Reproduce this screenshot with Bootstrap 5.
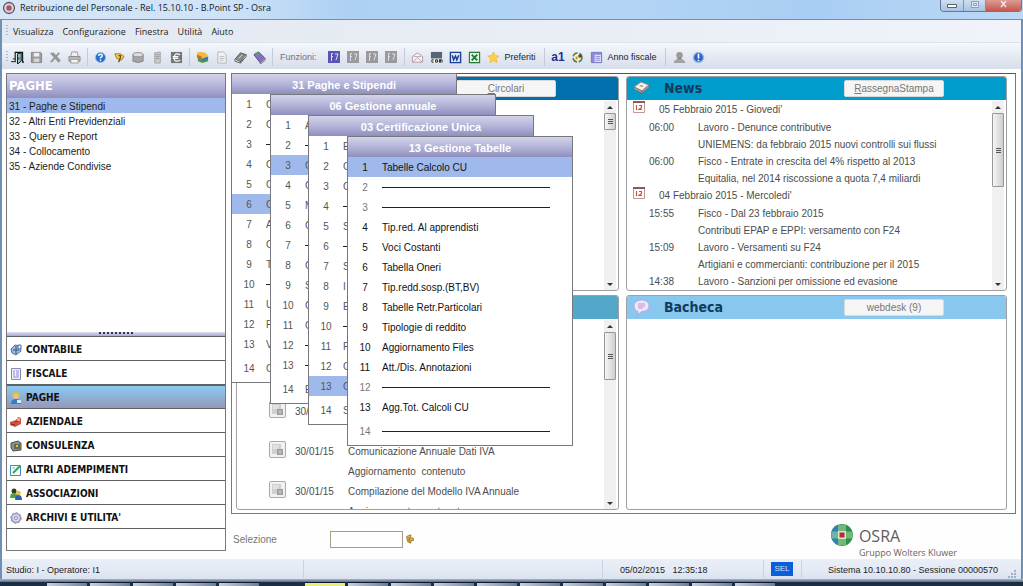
<!DOCTYPE html>
<html lang="it">
<head>
<meta charset="utf-8">
<meta name="viewport" content="width=device-width, initial-scale=1">
<title>Retribuzione del Personale - Osra</title>
<link href="https://cdn.jsdelivr.net/npm/bootstrap@5.3.0/dist/css/bootstrap.min.css" rel="stylesheet">
<style>
  :root {
    --ui: "Liberation Sans", Arial, sans-serif;
    --chrome: "Open Sans", "Segoe UI", sans-serif;
    --strong: "DejaVu Sans Condensed", Tahoma, sans-serif;
    --line: #77777d;
    --lilac: linear-gradient(#d3d3ea, #b4b4da 50%, #8f8fbd);
    --pick: #9fb9ec;
  }
  body { font-family: var(--ui); font-size: 10px; line-height: 14px; color: #1c1c1c; background: #fefefe; }
  button { font-family: inherit; color: inherit; }
  a { color: inherit; text-decoration: none; }
  svg { display: block; }

  /* window chrome */
  .titlebar { height: 19px; padding: 0 1px 2px 2px; color: #0d1a2a;
    background: linear-gradient(90deg, #d6e6f6 0, #cfe3f8 22%, #add0f4 34%, #b3d4f5 60%, #a9cef3 80%, #bcd8f5 100%); }
  .titlebar h1 { font: 9px/16px var(--chrome); }
  .winbtns { height: 12px; border: 1px solid #64789a; border-top: 0; border-radius: 0 0 4px 4px; overflow: hidden; }
  .winbtns button { border: 0; padding: 0; width: 22px; background: linear-gradient(#cfdff0, #a9c3e0); }
  .winbtns button + button { border-left: 1px solid #7f93b0; }
  .winbtns .shut { width: 36px; background: linear-gradient(#dd9c93, #c4584c); }
  .frame { border: solid #6f8fb5; border-width: 1px 2px 0; min-height: 0; }
  .menubar { height: 23px; padding-left: 4px; gap: 9px; background: linear-gradient(90deg, #e2e8f1, #e9eef6 60%, #f0f3f9); font: 9px/20px var(--chrome); border-bottom: 1px solid #dde3ec; }
  .menubar a { padding-top: 2px; }
  .menubar .grip { margin-right: -4px; }
  .grip { width: 2px; height: 12px; background: repeating-linear-gradient(#a9b8d0 0 1px, transparent 1px 3px); }
  .tools { height: 26px; padding: 2px 0 0 4px; background: linear-gradient(#f5f8fc, #e3e8f2 55%, #d8deea); font-size: 9px; }
  .tools button { border: 0; background: none; padding: 0; width: 19px; height: 20px; display: flex; align-items: center; justify-content: center; }
  .tools .wide { width: auto; gap: 5px; padding: 0 4px 0 3px; }
  .vr-line { width: 1px; height: 18px; background: #c3cad8; margin: 0 3px; }
  .vr-line.far { margin: 0 4px; }

  /* side panel */
  .workspace { background: #fefefe; padding: 4px 5px 0 4px; gap: 5px; min-height: 0; }
  .side { flex: 0 0 220px; margin-bottom: 8px; border: 1px solid var(--line); background: #fff; }
  .side h2 { height: 24px; margin: 0; padding-left: 2px; font: bold 13px/23px var(--strong); color: #fff; background: var(--lilac); }
  .side .picks a { display: block; height: 15px; line-height: 17px; padding-left: 2px; }
  .side .picks .on { background: var(--pick); }
  .splitter { height: 4px; background: linear-gradient(#dcdcf0, #a9a9d2); }
  .splitter i { display: block; width: 35px; height: 2px; margin: 0 auto; background: repeating-linear-gradient(90deg, #33334d 0 2px, transparent 2px 4px); }
  .areas a { display: flex; align-items: center; gap: 4px; height: 24px; padding: 2px 0 0 3px; border-top: 1px solid #5f5f66; font: bold 10px/20px var(--strong); color: #111; }
  .areas .on { background: linear-gradient(#8ccbf2, #8fb3d8 45%, #9797b8); border-top-width: 2px; }
  .areas .rest { height: 22px; border-top: 1px solid #5f5f66; }

  /* panels */
  .stage, .stage-wrap { min-width: 0; min-height: 0; }
  .desk { border: 1px solid var(--line); border-top-color: #555; padding: 2px 8px 3px 4px; background: #fff; display: grid;
    grid-template: minmax(0, 1fr) minmax(0, 1fr) / minmax(0, 383fr) minmax(0, 381fr); gap: 4px 7px; min-height: 0; }
  .pane { border: 1px solid #a0a0a4; border-radius: 3px; overflow: hidden; min-height: 0; background: #fff; }
  .pane-head { height: 24px; margin: -1px -1px 0; padding: 0 63px 0 7px; flex: none; color: #113a5c; }
  .pane-head h2 { margin: 0; padding-left: 14px; font: bold 14px/24px var(--strong); }
  .pane-head .tag { width: 100px; height: 17px; border: 1px solid #d9d9d9; border-radius: 2px; padding: 1px 0 0; background: #f5f5f5; color: #777; line-height: 14px; }
  .h-circ { background: #006fab; } .h-news { background: #009dcc; } .h-low { background: #53a8ca; } .h-bach { background: #88c8ef; }
  .pane-body { color: #4c4c4c; min-height: 0; overflow: hidden; }
  .sbar { width: 12px; margin: 1px 2px 0 0; flex: none; background: #f0f0f0; }
  .sbar b { height: 12px; display: flex; align-items: center; justify-content: center; }
  .sbar b::before { content: ""; border: solid transparent; border-width: 0 3px 3px; border-bottom-color: #333; }
  .sbar b:last-child { margin-top: auto; }
  .sbar b:last-child::before { border-width: 3px 3px 0; border-top-color: #333; }
  .sbar i { border: 1px solid #979797; border-radius: 1px; background: linear-gradient(90deg, #f5f5f5, #cfcfcf); display: flex; align-items: center; justify-content: center; }
  .sbar i::before { content: ""; width: 5px; height: 5px; background: repeating-linear-gradient(#555 0 1px, transparent 1px 2px); }
  .thumb-s { height: 17px; } .thumb-m { height: 48px; } .thumb-l { height: 74px; }

  .news { margin: 0; padding-top: 1px; }
  .news dt { display: flex; gap: 14px; height: 18px; line-height: 18px; padding-left: 6px; font-weight: 400; align-items: flex-start; }
  .news dd { display: flex; height: 17px; line-height: 18px; margin: 0; padding-left: 22px; }
  .news time { width: 49px; flex: none; }

  .bulletins { padding: 82px 0 0 32px; margin: 0; list-style: none; }
  .bulletins li { display: grid; grid-template-columns: 26px 53px 1fr; grid-auto-rows: 20px; line-height: 21px; white-space: nowrap; }
  .bulletins p { margin: 0; grid-column: 3; }
  .doc-btn { width: 17px; height: 17px; padding: 1px; border: 1px solid #aaa; border-radius: 2px; background: #f1f1f1; }

  /* cascading menus, laid over the desk */
  .cascade { position: absolute; width: 226px; border: 1px solid var(--line); background: #fff; overflow: hidden; }
  .c1 { left: 0; top: 0; } .c2 { left: 39px; top: 21px; } .c3 { left: 77px; top: 42px; } .c4 { left: 116px; top: 63px; }
  .cascade h3 { margin: 0; height: 20px; font: bold 11px/22px var(--ui); color: #fff; text-align: center; background: var(--lilac); }
  .cascade ol { list-style: none; margin: 0; padding: 0; }
  .cascade li { display: flex; align-items: center; height: 20px; line-height: 18px; color: #555; }
  .cascade li:last-child { height: 28px; }
  .cascade li span { width: 34px; text-align: center; flex: none; padding-top: 2px; }
  .cascade li a { padding-top: 2px; }
  .cascade li.on { background: var(--pick); }
  .cascade hr { width: 168px; margin: 0; border-top: 1px solid #222; opacity: 1; }
  .c4 li { color: #111; }
  .c4 li.off span { color: #777; }

  /* selection strip and status bar */
  .strip { height: 45px; padding-left: 2px; color: #777; }
  .strip label { padding-top: 6px; }
  .strip input { width: 73px; height: 17px; margin: 5px 2px 0 53px; padding: 0 2px; border: 1px solid #a59f86; background: #fff; }
  .strip .hand { margin: 5px auto 0 0; }
  .strip .globe { margin: 9px 5px 0 0; }
  .brand { margin-right: 59px; padding-top: 12px; color: #5d5d5d; }
  .brand strong { display: block; font: 16px/20px var(--chrome); }
  .brand small { display: block; font: 9px/13px var(--chrome); color: #6b625a; }
  .status { height: 20px; padding: 0 5px 0 4px; font-size: 9px; line-height: 20px; background: linear-gradient(#e9eef7, #e4eaf4 60%, #dbe2ee); }
  .status .cell { height: 18px; border-right: 1px solid #cbd3e0; white-space: nowrap; }
  .cell-user { flex: 0 0 298px; }
  .cell-time { flex: 0 0 161px; padding-left: 17px; }
  .cell-sel { flex: 0 0 38px; padding-left: 7px; }
  .cell-sys { flex: 0 0 206px; padding: 1px 0 0 26px; }
  .status .sel { width: 22px; height: 14px; line-height: 14px; background: #0b5fd8; color: #cfe2ff; text-align: center; font-size: 8px; }
  .edge { height: 3px; background: linear-gradient(#a9b9d0, #566b8c); }
  .taskbar { height: 4px; background: #1d2d42; padding-left: 47px; gap: 3px; overflow: hidden; }
  .taskbar i { width: 40px; border-top: 1px solid #0e1826; background: linear-gradient(90deg, #c9d1dc, #6d7f96); }
  .taskbar .lit { background: #ecec7a; }
</style>
</head>
<body class="d-flex flex-column vh-100 overflow-hidden">
<svg width="0" height="0" class="position-absolute" aria-hidden="true">
  <symbol id="door" viewBox="0 0 14 14"><path d="M0 11.500h4M2 8.500h2" stroke="#111"/><path d="M4.500 12V1.500h8V12H14" fill="none" stroke="#111" stroke-width="1.200"/><path d="M7 3l4-1v9l-4 3z" fill="#8fc4c2" stroke="#111"/><path d="M8.500 7v2" stroke="#111"/></symbol>
  <symbol id="disk" viewBox="0 0 14 14"><path d="M1.500 1.500h10l1 1v10h-11z" fill="#9b9b9b" stroke="#858585"/><path d="M4 2h6v4H4z" fill="#eee"/><path d="M4 8h6v4H4z" fill="#d5d5d5"/></symbol>
  <symbol id="cross" viewBox="0 0 14 14"><path d="M2 2l9 10M11 2L2 12M4 2l8 9" stroke="#969696" stroke-width="2"/></symbol>
  <symbol id="print" viewBox="0 0 14 14"><path d="M4 1h6l1 5H3z" fill="#eee" stroke="#999"/><path d="M1 6h12v5H1z" fill="#bbb" stroke="#8b8b8b"/><path d="M3 9h8v4H3z" fill="#f3f3f3" stroke="#999"/></symbol>
  <symbol id="help" viewBox="0 0 14 14"><circle cx="7" cy="7" r="5.500" fill="#2c6fd0" stroke="#9cc0ee"/><path d="M5 5.500q0-2 2-2t2 1.700q0 1-2 2V8M7 9.200v1.500" stroke="#fff" stroke-width="1.400" fill="none"/></symbol>
  <symbol id="hint" viewBox="0 0 14 14"><path d="M2 3h6l4 3-3 4-5-2z" fill="#f4cc4a" stroke="#a97a1d"/><path d="M6 5h2v2L6 12" stroke="#6d4a10" stroke-width="1.400" fill="none"/></symbol>
  <symbol id="db" viewBox="0 0 14 14"><path d="M1 4v7q5.500 3 11 0V4" fill="#a5a5a5" stroke="#858585"/><ellipse cx="6.500" cy="4" rx="5.500" ry="2.300" fill="#ddd" stroke="#8c8c8c"/></symbol>
  <symbol id="tower" viewBox="0 0 14 14"><path d="M4 2l6-1v12H4z" fill="#c8c8c8" stroke="#a5a5a5"/><path d="M5 4h4M5 6h4M5 8h4" stroke="#999"/></symbol>
  <symbol id="euro" viewBox="0 0 14 14"><path d="M1 1h12v12H1z" fill="#777"/><path d="M11 4Q5 1 4.500 7T11 10M3 6h6M3 8h6" stroke="#fff" fill="none" stroke-width="1.300"/></symbol>
  <symbol id="cube" viewBox="0 0 14 14"><path d="M2 6l5 2 6-2v5l-6 2-5-2z" fill="#4d9a4a"/><path d="M1 2q4-2 9 0l3 3-6 3-6-2z" fill="#f0bc38"/><path d="M1 4l5 2v3L1 7z" fill="#d9622e"/><path d="M7 8l6-2v3l-6 2z" fill="#3b78b8"/></symbol>
  <symbol id="page" viewBox="0 0 14 14"><path d="M3 1h6l3 3v9H3z" fill="#f0f0f0" stroke="#b5b5b5"/><path d="M5 6h5M5 8h5M5 10h4" stroke="#bbb"/></symbol>
  <symbol id="book" viewBox="0 0 14 14"><path d="M1 9l6-7 6 2-6 8z" fill="#888" stroke="#555"/><path d="M1 9v2l6 2v-1M7 13l6-7V4" fill="#eee" stroke="#555"/><path d="M5 8l4-4" stroke="#ddd"/></symbol>
  <symbol id="books" viewBox="0 0 14 14"><path d="M1 4l5-3 7 7-5 5z" fill="#8a6cc8" stroke="#54418f"/><path d="M2 2l4 0 1 3-3 1z" fill="#57a06a"/><path d="M8 13l5-5v2l-5 4z" fill="#eee" stroke="#777"/></symbol>
  <symbol id="mail" viewBox="0 0 14 14"><path d="M1.500 6L7 2l5.500 4v6h-11z" fill="#fbeff0" stroke="#a89aa0"/><path d="M2 12l5-5 5 5M3 6h8" fill="none" stroke="#b7a5aa"/></symbol>
  <symbol id="com" viewBox="0 0 14 14"><path d="M1 1h12v7H1z" fill="#576577"/><path d="M1 9h12v4H1z" fill="#f5f5f5"/><path d="M4 9.500H2v2.500h2M6 9.500h2V12H6zM10 12.500v-3h1v3v-3h2v3" stroke="#222" fill="none"/></symbol>
  <symbol id="word" viewBox="0 0 14 14"><path d="M1.500 1.500h11v11h-11z" fill="#dfe9fb" stroke="#1d3f94" stroke-width="1.500"/><path d="M3.500 4.500l1.500 5 2-4 1.500 4 2-5" stroke="#1d3f94" stroke-width="1.600" fill="none"/></symbol>
  <symbol id="excel" viewBox="0 0 14 14"><path d="M1.500 1.500h11v11h-11z" fill="#e5f4e5" stroke="#27793b" stroke-width="1.200"/><path d="M4 4l6 6M10 4l-6 6" stroke="#1f7a34" stroke-width="2"/></symbol>
  <symbol id="star" viewBox="0 0 14 14"><path d="M7 1l1.800 4 4.200.4-3.200 2.800 1 4.300L7 10.200l-3.800 2.300 1-4.300L1 5.400 5.200 5z" fill="#ffd23f" stroke="#e3a82b" stroke-width=".6"/></symbol>
  <symbol id="cycle" viewBox="0 0 14 14"><circle cx="7" cy="7" r="4.800" fill="#f4f0c8" stroke="#4c7a42" stroke-width="1.600" stroke-dasharray="6 2"/><path d="M5 6h2v3H5z" fill="#cf8a2a"/><path d="M8 4h3v3H8z" fill="#444"/></symbol>
  <symbol id="sheet" viewBox="0 0 14 14"><path d="M1.500 1.500h11v11h-11z" fill="#dfe0fa" stroke="#6a6ab8"/><path d="M2 2h10v2H2zM2 4h3v8H2z" fill="#8d8bd8"/><path d="M6 6h5M6 8h5M6 10h5" stroke="#8d8bd8"/></symbol>
  <symbol id="person" viewBox="0 0 14 14"><circle cx="7" cy="4.500" r="3.500" fill="#999"/><path d="M5 8h4l4 3v2H1v-2z" fill="#a3a3a3"/><path d="M5 8h4" stroke="#777"/></symbol>
  <symbol id="info" viewBox="0 0 14 14"><circle cx="7" cy="7" r="5.500" fill="#2d63c4" stroke="#9dbcec" stroke-width="1.500"/><path d="M7 3v5M7 9.500V11" stroke="#fff" stroke-width="1.800"/></symbol>
  <symbol id="cal" viewBox="0 0 12 12"><path d="M.5 1.500h11v10H.5z" fill="#fff" stroke="#b99"/><path d="M0 0h12v2H0z" fill="#8a5a5a"/><path d="M3.500 4v5M6 4.500h2.500v2L6 8.500h3" stroke="#d4542e" stroke-width="1.200" fill="none"/></symbol>
  <symbol id="slip" viewBox="0 0 13 13"><path d="M1 1h9v10H1z" fill="#d0d0d0"/><path d="M2 3h6M2 5h5" stroke="#f5f5f5"/><path d="M6 6h6v6H6z" fill="#9b9b9b"/><path d="M7.500 8h3M7.500 10h3" stroke="#d8d8d8"/></symbol>
</svg>

<header class="titlebar d-flex align-items-start flex-shrink-0">
  <svg width="14" height="15" viewBox="0 0 14 15"><circle cx="7" cy="8" r="5.500" fill="#e8d5dc" stroke="#5b5664" stroke-width="1.300"/><circle cx="7" cy="8" r="3" fill="#a2566b" stroke="#cfa0ae"/></svg>
  <h1 class="m-0 ms-1 me-auto">Retribuzione del Personale - Rel. 15.10.10 - B.Point SP - Osra</h1>
  <div class="winbtns d-flex">
    <button type="button" aria-label="Riduci a icona"><svg width="21" height="11"><path d="M6.500 4.500h9v3h-9z" fill="#fff" stroke="#566"/></svg></button>
    <button type="button" aria-label="Ingrandisci"><svg width="21" height="11"><path d="M7.500 1.500h7v6h-7z" fill="#dfe9f5" stroke="#8d9db5"/><path d="M9.500 3.500h3v2h-3z" fill="none" stroke="#8d9db5"/></svg></button>
    <button type="button" class="shut" aria-label="Chiudi"><svg width="35" height="11"><path d="M15 1l5 6M20 1l-5 6" stroke="#f3e3e3" stroke-width="1.500"/></svg></button>
  </div>
</header>

<div class="frame d-flex flex-column flex-grow-1">
  <nav class="menubar d-flex align-items-center flex-shrink-0" aria-label="Menu">
    <span class="grip"></span>
    <a href="#">Visualizza</a><a href="#">Configurazione</a><a href="#">Finestra</a><a href="#">Utilità</a><a href="#">Aiuto</a>
  </nav>
  <div class="tools d-flex align-items-center flex-shrink-0" role="toolbar" aria-label="Strumenti" id="tools">
    <span class="grip"></span>
  </div>

  <main class="workspace d-flex flex-grow-1">
    <aside class="side d-flex flex-column">
      <h2>PAGHE</h2>
      <nav class="picks flex-grow-1" aria-label="Paghe">
        <a href="#" class="on">31 - Paghe e Stipendi</a>
        <a href="#">32 - Altri Enti Previdenziali</a>
        <a href="#">33 - Query e Report</a>
        <a href="#">34 - Collocamento</a>
        <a href="#">35 - Aziende Condivise</a>
      </nav>
      <div class="splitter"><i></i></div>
      <nav class="areas" aria-label="Aree">
        <a href="#"><svg width="12" height="12"><path d="M1 5l4-4 5 1 1 5-5 4-4-2z" fill="#9dbbe0" stroke="#51719c"/><path d="M3 6h6M6 2v8" stroke="#365785"/><path d="M8 1h3v4H8z" fill="#dcebfa" stroke="#51719c"/></svg>CONTABILE</a>
        <a href="#"><svg width="12" height="12"><path d="M1.500.5h9v11h-9z" fill="#eef" stroke="#8585b8"/><path d="M3 3h2M3 5h2M3 7h2M6 3h3M6 5h3M6 7h3M3 9h6" stroke="#8f8fc4"/></svg>FISCALE</a>
        <a href="#" class="on"><svg width="12" height="12"><path d="M1 12q0-5 5-5t5 5z" fill="#2f7fc4"/><circle cx="6" cy="4" r="3" fill="#e9c08b"/><path d="M2 4q0-4 4-4t4 4q-2-2-4-2T2 4z" fill="#e2c02d"/><path d="M7 8h4v3H7z" fill="#d7ecfb"/></svg>PAGHE</a>
        <a href="#"><svg width="12" height="12"><path d="M0 6l6-2 2-3 3 1v6l-6 3-5-2z" fill="#d0523f"/><path d="M5 6l5-2M1 8l4 1" stroke="#7c2c22"/><path d="M7 2h3v3H7z" fill="#efa28f"/></svg>AZIENDALE</a>
        <a href="#"><svg width="12" height="12"><path d="M1 3l7-2 3 2v7l-8 1-2-3z" fill="#8b9184" stroke="#4e534a"/><path d="M4 4h6v5H4z" fill="#626a5d"/><path d="M6 5h2v2H6z" fill="#e5c43b"/></svg>CONSULENZA</a>
        <a href="#"><svg width="12" height="12"><path d="M.5 1.500h10v10H.5z" fill="#f2fbff" stroke="#3e8cba"/><path d="M3 9l7-7" stroke="#3ba24a" stroke-width="2"/><path d="M2 4h3" stroke="#8bc"/></svg>ALTRI ADEMPIMENTI</a>
        <a href="#"><svg width="12" height="12"><circle cx="4" cy="3" r="2.500" fill="#3b3a20"/><path d="M0 10q0-5 4-5t4 5z" fill="#4aa33f"/><circle cx="8.500" cy="5" r="2.300" fill="#eebc35"/><path d="M5 12q0-5 3.500-5T12 12z" fill="#2b62b5"/></svg>ASSOCIAZIONI</a>
        <a href="#"><svg width="12" height="12"><circle cx="6" cy="6" r="4.500" fill="#d6d6ea" stroke="#9a9ac2" stroke-width="1.600"/><circle cx="6" cy="6" r="5.300" fill="none" stroke="#9a9ac2" stroke-dasharray="2 2"/><circle cx="6" cy="6" r="1.500" fill="#f8f8fd" stroke="#8d8db6"/></svg>ARCHIVI E UTILITA'</a>
        <div class="rest"></div>
      </nav>
    </aside>

    <div class="stage-wrap d-flex flex-column flex-grow-1">
      <div class="stage position-relative flex-grow-1 d-flex">
      <div class="desk flex-grow-1">
        <section class="pane d-flex flex-column">
          <div class="pane-head h-circ d-flex align-items-center justify-content-end"><button type="button" class="tag"><u>C</u>ircolari</button></div>
          <div class="pane-body d-flex flex-grow-1 justify-content-end"><div class="sbar d-flex flex-column"><b></b><i class="thumb-s"></i><b></b></div></div>
        </section>
        <section class="pane d-flex flex-column">
          <div class="pane-head h-news d-flex align-items-center">
            <svg width="17" height="14"><path d="M1 6l7-5 8 3-7 6z" fill="#f1f1f1" stroke="#8a8a8a"/><path d="M1 6v2l8 4v-2zM9 12l7-6V4l-7 6z" fill="#b5b5b5" stroke="#777"/><path d="M6 5l2-1 3 1-2 1z" fill="#c98a80"/></svg>
            <h2 class="me-auto">News</h2>
            <button type="button" class="tag"><u>R</u>assegnaStampa</button>
          </div>
          <div class="pane-body d-flex flex-grow-1">
            <dl class="news flex-grow-1">
              <dt><svg width="12" height="12"><use href="#cal"/></svg>05 Febbraio 2015 - Giovedi'</dt>
              <dd><time>06:00</time>Lavoro - Denunce contributive</dd>
              <dd><time></time>UNIEMENS: da febbraio 2015 nuovi controlli sui flussi</dd>
              <dd><time>06:00</time>Fisco - Entrate in crescita del 4% rispetto al 2013</dd>
              <dd><time></time>Equitalia, nel 2014 riscossione a quota 7,4 miliardi</dd>
              <dt><svg width="12" height="12"><use href="#cal"/></svg>04 Febbraio 2015 - Mercoledi'</dt>
              <dd><time>15:55</time>Fisco - Dal 23 febbraio 2015</dd>
              <dd><time></time>Contributi EPAP e EPPI: versamento con F24</dd>
              <dd><time>15:09</time>Lavoro - Versamenti su F24</dd>
              <dd><time></time>Artigiani e commercianti: contribuzione per il 2015</dd>
              <dd><time>14:38</time>Lavoro - Sanzioni per omissione ed evasione</dd>
            </dl>
            <div class="sbar d-flex flex-column"><b></b><i class="thumb-l"></i><b></b></div>
          </div>
        </section>
        <section class="pane d-flex flex-column">
          <div class="pane-head h-low"></div>
          <div class="pane-body d-flex flex-grow-1">
            <ul class="bulletins flex-grow-1">
              <li><button type="button" class="doc-btn" aria-label="Apri"><svg width="13" height="13"><use href="#slip"/></svg></button><time>30/01/15</time><p></p><p></p></li>
              <li><button type="button" class="doc-btn" aria-label="Apri"><svg width="13" height="13"><use href="#slip"/></svg></button><time>30/01/15</time><p>Comunicazione Annuale Dati IVA</p><p>Aggiornamento&nbsp; contenuto</p></li>
              <li><button type="button" class="doc-btn" aria-label="Apri"><svg width="13" height="13"><use href="#slip"/></svg></button><time>30/01/15</time><p>Compilazione del Modello IVA Annuale</p><p>Aggiornamento&nbsp; contenuto</p></li>
            </ul>
            <div class="sbar d-flex flex-column"><b></b><i class="thumb-m"></i><b></b></div>
          </div>
        </section>
        <section class="pane d-flex flex-column">
          <div class="pane-head h-bach d-flex align-items-center">
            <svg width="17" height="17"><path d="M8.500 1C4 1 1 3.500 1 7s2 5 4 5.500L4 16l5-3.500c4 0 7-2 7-5.500S13 1 8.500 1z" fill="#ece6fb" stroke="#b7a3dd"/><path d="M5 5h7M5 7h7M5 9h5" stroke="#c293d4"/></svg>
            <h2 class="me-auto">Bacheca</h2>
            <button type="button" class="tag">webdesk (9)</button>
          </div>
        </section>
      </div>
      <section class="cascade c1"><h3>31 Paghe e Stipendi</h3><ol data-items="C|C|-|C|C|*C|A|C|T|-|U|F|V|C"></ol></section>
      <section class="cascade c2"><h3>06 Gestione annuale</h3><ol data-items="A|-|*C|C|M|C|-|C|S|C|C|-|-|E"></ol></section>
      <section class="cascade c3"><h3>03 Certificazione Unica</h3><ol data-items="E|C|C|-|S|-|S|I|E|-|F|C|*C|S"></ol></section>
      <section class="cascade c4"><h3>13 Gestione Tabelle</h3><ol data-items="*Tabelle Calcolo CU|-|-|Tip.red. Al apprendisti|Voci Costanti|Tabella Oneri|Tip.redd.sosp.(BT,BV)|Tabelle Retr.Particolari|Tipologie di reddito|Aggiornamento Files|Att./Dis. Annotazioni|-|Agg.Tot. Calcoli CU|-"></ol></section>
      </div>
      <form class="strip d-flex align-items-center flex-shrink-0">
        <label for="selezione">Selezione</label>
        <input id="selezione" type="text">
        <svg width="10" height="12" viewBox="0 0 12 12" class="hand"><path d="M2 3l5-2v4h3v3H7v3l-4-2z" fill="#e5bd4a" stroke="#8d6a1e"/><path d="M5 4v5" stroke="#5f4513"/></svg>
        <svg width="24" height="24" viewBox="0 0 24 24" class="globe align-self-start"><circle cx="12" cy="12" r="11" fill="#2f8f4e"/><path d="M1 12A11 11 0 0 1 7 2l3 6-1 8-3 5A11 11 0 0 1 1 12z" fill="#2f82b5"/><path d="M8 1.700h8v20.600H8zM1.300 8.500h21.400v7H1.300z" fill="#9fd49a" fill-opacity=".6"/><path d="M8 8h8v8H8z" fill="#d6ebb8"/><path d="M9.500 9.500h5v5h-5z" fill="#c0224e"/></svg>
        <div class="brand align-self-start"><strong>OSRA</strong><small>Gruppo Wolters Kluwer</small></div>
      </form>
    </div>
  </main>

  <footer class="status d-flex align-items-center flex-shrink-0">
    <div class="cell cell-user">Studio: I - Operatore: I1</div>
    <div class="cell flex-grow-1"></div>
    <div class="cell cell-time">05/02/2015&nbsp;&nbsp; 12:35:18</div>
    <div class="cell cell-sel d-flex align-items-center"><span class="sel">SEL</span></div>
    <div class="cell-sys">Sistema 10.10.10.80 - Sessione 00000570</div>
    <svg width="8" height="9" class="align-self-end"><path d="M6 1h2M3 4h2M6 4h2M0 7h2M3 7h2M6 7h2" stroke="#9fb0cc" stroke-width="2"/></svg>
  </footer>
</div>
<div class="edge flex-shrink-0"></div>
<div class="taskbar d-flex flex-shrink-0"><i></i><i></i><i></i><i></i><i></i><i class="opacity-0"></i><i class="lit"></i><i></i><i></i><i></i><i></i><i></i><i></i><i></i><i></i><i></i><i></i></div>

<script src="https://cdn.jsdelivr.net/npm/bootstrap@5.3.0/dist/js/bootstrap.bundle.min.js"></script>
<script>
  // toolbar: symbol names, "|" and "||" for dividers
  const bar = document.getElementById('tools');
  const icon = id => `<svg width="13" height="13"><use href="#${id}"/></svg>`;
  const fkey = (n, bg) => `<button type="button" aria-label="F${n}"><svg width="12" height="12"><path d="M0 0h12v12H0z" fill="${bg}"/><path d="M3.500 10V2.500H5M3 5.500h2M7 3h3L8 9" stroke="#dcdcf0" fill="none"/></svg></button>`;
  const items = ['door','disk','cross','print','|','help','hint','db','tower','euro','|','cube','page','book','books','|','Funzioni','F','|','mail','com','word','excel','star:Preferiti','||','a1','cycle','sheet:Anno fiscale','||','person','info'];
  bar.innerHTML += items.map(t => {
    if (t === '|') return '<span class="vr-line"></span>';
    if (t === '||') return '<span class="vr-line far"></span>';
    if (t === 'Funzioni') return '<span class="text-secondary ps-1 pe-2">Funzioni:</span>';
    if (t === 'F') return fkey(7, '#5a55b5') + fkey(8, '#9a9a9a') + fkey(9, '#9a9a9a') + fkey(11, '#9a9a9a');
    if (t === 'a1') return '<button type="button" style="font:bold 12px/14px var(--ui);color:#1c2f9c">a1</button>';
    const [id, label] = t.split(':');
    return label ? `<button type="button" class="wide">${icon(id)}${label}</button>` : `<button type="button" aria-label="${id}">${icon(id)}</button>`;
  }).join('');

  // menu rows: "-" is a rule, "*" marks the current row
  document.querySelectorAll('ol[data-items]').forEach(ol => {
    ol.innerHTML = ol.dataset.items.split('|').map((t, i) => {
      const cls = t[0] === '*' ? 'on' : t === '-' ? 'off' : '';
      return `<li class="${cls}"><span>${i + 1}</span>${t === '-' ? '<hr>' : `<a href="#">${t.replace('*', '')}</a>`}</li>`;
    }).join('');
  });
</script>
</body>
</html>
